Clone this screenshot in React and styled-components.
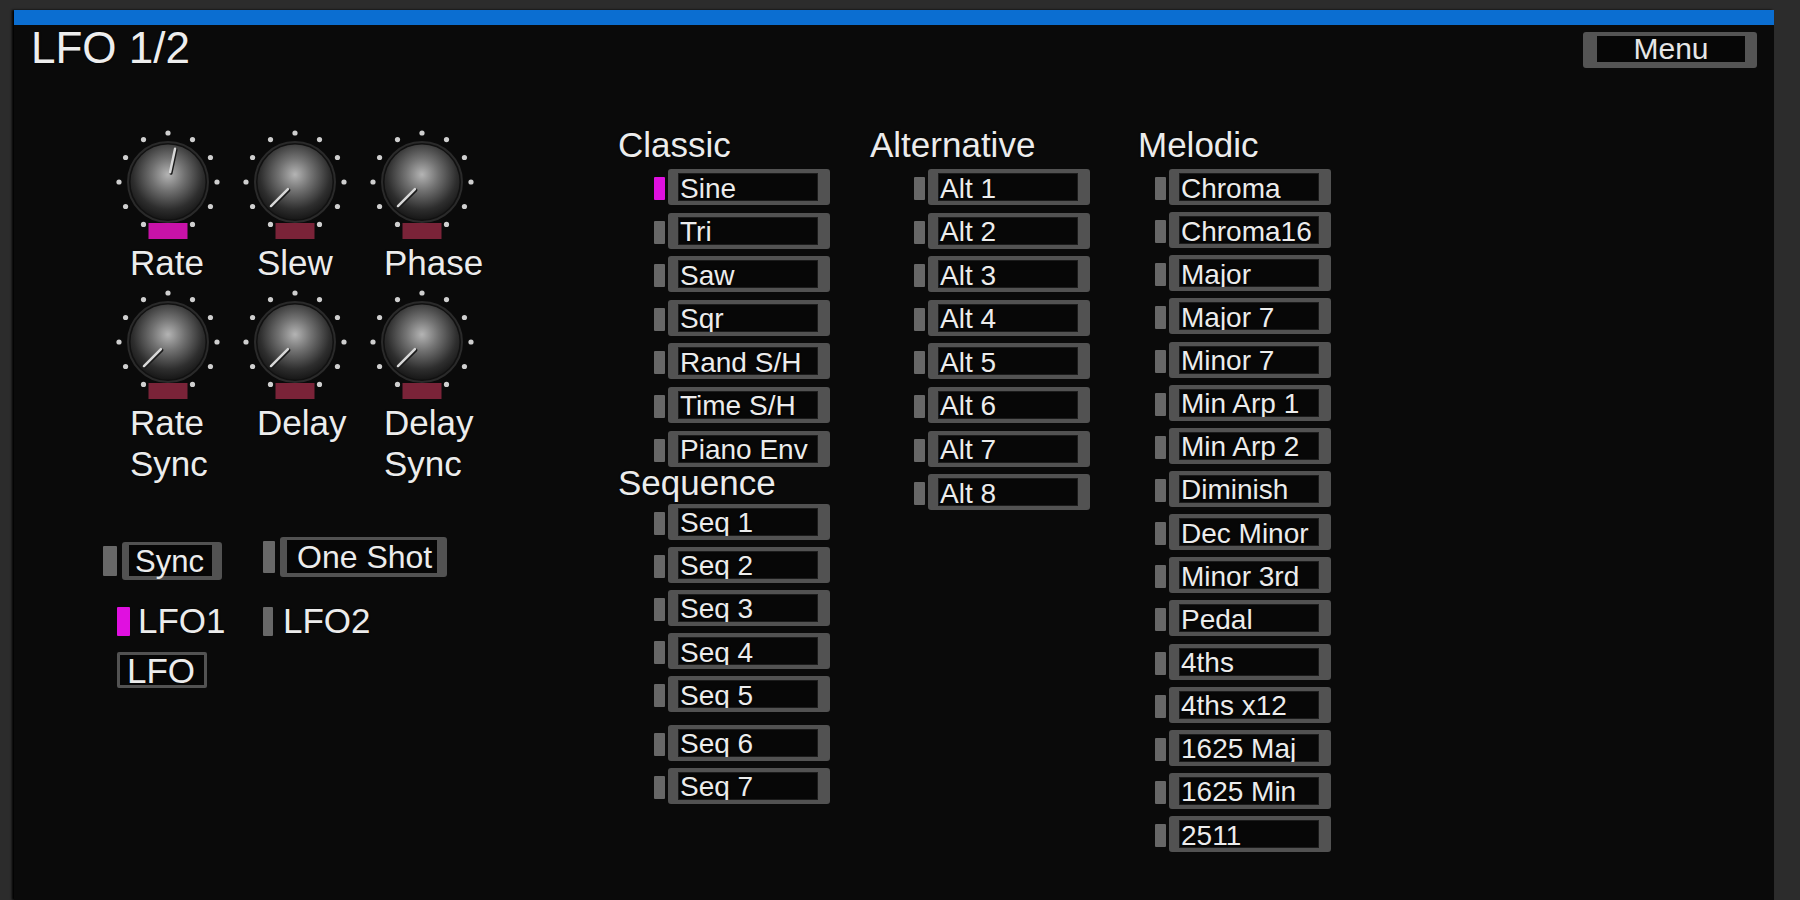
import React, { useId } from 'react';
import styled, { createGlobalStyle } from 'styled-components';

const GlobalStyle = createGlobalStyle`
    html, body {
        margin: 0;
        padding: 0;
        background: #2c2c2c;
        overflow: hidden;
    }
    body {
        font-family: "Liberation Sans", Arial, sans-serif;
        color: #ececec;
    }
`;

const Page = styled.div`
    padding: 10px 26px 0 14px;
    height: 100vh;
    box-sizing: border-box;
`;

const Panel = styled.div`
    height: 100%;
    background: #0a0a0a;
    box-shadow: -2px 0 2px #000;
    display: flex;
    flex-direction: column;
`;

const TopBar = styled.div`
    height: 15px;
    background: #0b6ed1;
    flex-shrink: 0;
`;

const Header = styled.div`
    display: flex;
    justify-content: space-between;
    align-items: flex-start;
    padding: 1px 17px 0;
`;

const Title = styled.h1`
    margin: 0;
    font-size: 44px;
    line-height: 44px;
    font-weight: normal;
    color: #eeeeee;
    text-shadow: 0 0 2px #000;
`;

const MenuButton = styled.button`
    margin-top: 6px;
    width: 174px;
    height: 36px;
    box-sizing: border-box;
    background: #060606;
    border: solid #545454;
    border-width: 4px 12px 6px 14px;
    border-radius: 3px;
    color: #e6e6e6;
    font-family: inherit;
    font-size: 30px;
    line-height: 24px;
    padding: 0;
    cursor: pointer;
`;

const Main = styled.div`
    display: grid;
    grid-template-columns: 515px 252px 268px 1fr;
    padding: 55px 0 0 89px;
    align-items: start;
`;

/* ---------- left: knobs and toggles ---------- */

const LeftSection = styled.div`
    display: flex;
    flex-direction: column;
    align-items: flex-start;
`;

const KnobGrid = styled.div`
    display: grid;
    grid-template-columns: repeat(3, 127px);
    row-gap: 5px;
    margin: 3px 0 0 7px;
`;

const KnobUnit = styled.div`
    display: flex;
    flex-direction: column;
`;

const KnobLabel = styled.div`
    margin-top: 2px;
    padding-left: 20px;
    font-size: 35px;
    line-height: 41px;
    white-space: pre-line;
    text-shadow: 0 0 2px #000;
`;

const ToggleRow = styled.div`
    display: flex;
    align-items: flex-start;
    gap: 41px;
    margin-top: 53px;
`;

const ToggleGroup = styled.div`
    display: flex;
    align-items: center;
    gap: 5px;
    margin-top: ${p => p.drop || 0}px;
`;

const Led = styled.div`
    width: ${p => p.w}px;
    height: ${p => p.h}px;
    background: ${p => (p.on ? '#e010e0' : '#686868')};
    border-radius: 1px;
    flex-shrink: 0;
`;

const ToggleButton = styled.div`
    width: ${p => p.w}px;
    height: ${p => p.h}px;
    box-sizing: border-box;
    display: flex;
    align-items: center;
    background: #060606;
    border: solid #525252;
    border-width: 3px 10px 4px 7px;
    border-radius: 3px;
    padding: 2px 0 0 ${p => p.pad}px;
    font-size: ${p => p.size}px;
    line-height: 31px;
    white-space: nowrap;
`;

const LfoRow = styled.div`
    display: flex;
    margin: 23px 0 0 14px;
    height: 36px;
`;

const LfoOption = styled.div`
    display: flex;
    align-items: center;
    gap: ${p => p.gap}px;
    width: 146px;
    font-size: 35px;
    line-height: 36px;
    text-shadow: 0 0 2px #000;
`;

const LfoButton = styled.div`
    margin: 13px 0 0 14px;
    width: 90px;
    height: 36px;
    box-sizing: border-box;
    display: flex;
    align-items: center;
    border: 3px solid #525252;
    border-radius: 2px;
    background: #060606;
    padding: 2px 0 0 7px;
    font-size: 35px;
    line-height: 30px;
`;

/* ---------- right: waveform lists ---------- */

const ListColumn = styled.div`
    display: flex;
    flex-direction: column;
`;

const Heading = styled.div`
    font-size: 35px;
    line-height: 40px;
    height: 40px;
    margin: ${p => (p.after ? '-4px' : '0')} 0 ${p => (p.after ? 1 : 4)}px;
    text-shadow: 0 0 2px #000;
`;

const Items = styled.div`
    display: flex;
    flex-direction: column;
    gap: ${p => p.gap}px;
    padding-left: ${p => p.indent}px;
`;

const ItemRow = styled.div`
    display: flex;
    align-items: center;
    gap: 3px;
    height: 36px;
    margin-top: ${p => (p.extra ? 5 : 0)}px;
`;

const ItemLed = styled.div`
    width: 11px;
    height: 23px;
    margin-top: 3px;
    background: ${p => (p.on ? '#e010e0' : '#676767')};
    border-radius: 1px;
`;

const Choice = styled.div`
    width: 162px;
    height: 36px;
    box-sizing: border-box;
    display: flex;
    align-items: center;
    background: #070707;
    border: solid #525252;
    border-width: 4px 12px 4px 10px;
    border-radius: 3px;
    box-shadow: inset 0 0 0 1px #1c1c1c;
    padding: 3px 0 0 2px;
    font-size: 28px;
    line-height: 28px;
    white-space: nowrap;
    overflow: hidden;
    text-shadow: 0 0 2px #000;
`;

function Knob({ angle, barColor, label }) {
    const id = useId().replace(/:/g, '');
    const cx = 58;
    const cy = 54;
    const dots = [];
    for (let a = -150; a <= 150; a += 30) {
        const r = (a * Math.PI) / 180;
        dots.push(
            <circle key={a} cx={cx + 49 * Math.sin(r)} cy={cy - 49 * Math.cos(r)} r="2.6" fill="#cfcfcf" />
        );
    }
    const rad = (angle * Math.PI) / 180;
    const p = (d) => [cx + d * Math.sin(rad), cy - d * Math.cos(rad)];
    const [x1, y1] = p(10);
    const [x2, y2] = p(34);

    return (
        <KnobUnit>
            <svg width="116" height="112" viewBox="0 0 116 112">
                <defs>
                    <radialGradient id={`g${id}`} cx="50%" cy="40%" r="62%">
                        <stop offset="0%" stopColor="#b4b4b4" />
                        <stop offset="35%" stopColor="#727272" />
                        <stop offset="75%" stopColor="#2e2e2e" />
                        <stop offset="100%" stopColor="#141414" />
                    </radialGradient>
                </defs>
                {dots}
                <circle cx={cx} cy={cy} r="40" fill="#111" stroke="#2a2a2a" strokeWidth="2" />
                <circle cx={cx} cy={cy} r="37.5" fill={`url(#g${id})`} />
                <line x1={x1 + 1} y1={y1 + 1} x2={x2 + 1} y2={y2 + 1} stroke="#1a1a1a" strokeWidth="3" strokeLinecap="round" />
                <line x1={x1} y1={y1} x2={x2} y2={y2} stroke="#d8d8d8" strokeWidth="2.5" strokeLinecap="round" />
                <rect x={cx - 19.5} y="95" width="39" height="16" fill={barColor} />
            </svg>
            <KnobLabel>{label}</KnobLabel>
        </KnobUnit>
    );
}

const knobs = [
    { label: 'Rate', angle: 12, bar: '#c812a8' },
    { label: 'Slew', angle: -135, bar: '#7a2338' },
    { label: 'Phase', angle: -135, bar: '#7a2338' },
    { label: 'Rate\nSync', angle: -135, bar: '#7a2338' },
    { label: 'Delay', angle: -135, bar: '#7a2338' },
    { label: 'Delay\nSync', angle: -135, bar: '#7a2338' },
];

const classic = ['Sine', 'Tri', 'Saw', 'Sqr', 'Rand S/H', 'Time S/H', 'Piano Env'];
const sequence = ['Seq 1', 'Seq 2', 'Seq 3', 'Seq 4', 'Seq 5', 'Seq 6', 'Seq 7'];
const alternative = ['Alt 1', 'Alt 2', 'Alt 3', 'Alt 4', 'Alt 5', 'Alt 6', 'Alt 7', 'Alt 8'];
const melodic = [
    'Chroma', 'Chroma16', 'Major', 'Major 7', 'Minor 7', 'Min Arp 1', 'Min Arp 2', 'Diminish',
    'Dec Minor', 'Minor 3rd', 'Pedal', '4ths', '4ths x12', '1625 Maj', '1625 Min', '2511',
];

function ChoiceList({ items, indent, gap = 7.5, active, extraAt }) {
    return (
        <Items indent={indent} gap={gap}>
            {items.map((name) => (
                <ItemRow key={name} extra={name === extraAt}>
                    <ItemLed on={name === active} />
                    <Choice>{name}</Choice>
                </ItemRow>
            ))}
        </Items>
    );
}

export default function App() {
    return (
        <>
            <GlobalStyle />
            <Page>
                <Panel>
                    <TopBar />
                    <Header>
                        <Title>LFO 1/2</Title>
                        <MenuButton>Menu</MenuButton>
                    </Header>
                    <Main>
                        <LeftSection>
                            <KnobGrid>
                                {knobs.map((k) => (
                                    <Knob key={k.label} label={k.label} angle={k.angle} barColor={k.bar} />
                                ))}
                            </KnobGrid>
                            <ToggleRow>
                                <ToggleGroup drop={5}>
                                    <Led w={14} h={30} />
                                    <ToggleButton w={100} h={38} pad={6} size={31}>Sync</ToggleButton>
                                </ToggleGroup>
                                <ToggleGroup>
                                    <Led w={12} h={32} />
                                    <ToggleButton w={167} h={40} pad={10} size={32}>One Shot</ToggleButton>
                                </ToggleGroup>
                            </ToggleRow>
                            <LfoRow>
                                <LfoOption gap={8}>
                                    <Led w={13} h={29} on />
                                    LFO1
                                </LfoOption>
                                <LfoOption gap={10}>
                                    <Led w={10} h={29} />
                                    LFO2
                                </LfoOption>
                            </LfoRow>
                            <LfoButton>LFO</LfoButton>
                        </LeftSection>

                        <ListColumn>
                            <Heading>Classic</Heading>
                            <ChoiceList items={classic} indent={36} gap={7.6} active="Sine" />
                            <Heading after>Sequence</Heading>
                            <ChoiceList items={sequence} indent={36} gap={7.2} extraAt="Seq 6" />
                        </ListColumn>

                        <ListColumn>
                            <Heading>Alternative</Heading>
                            <ChoiceList items={alternative} indent={44} gap={7.6} />
                        </ListColumn>

                        <ListColumn>
                            <Heading>Melodic</Heading>
                            <ChoiceList items={melodic} indent={17} gap={7.15} />
                        </ListColumn>
                    </Main>
                </Panel>
            </Page>
        </>
    );
}
